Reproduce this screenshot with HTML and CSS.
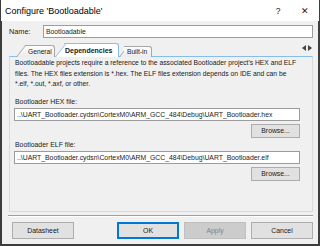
FILE: index.html
```html
<!DOCTYPE html>
<html lang="en">
<head>
    <meta charset="UTF-8">
    <title>Configure 'Bootloadable'</title>
    <link rel="stylesheet" href="styles.css">
</head>
<body>
    <div class="window">
        <div class="titlebar">
            <span class="title">Configure 'Bootloadable'</span>
            <span class="help">?</span>
            <span class="close">&#x2715;</span>
        </div>

        <div class="content">
            <div class="name-row">
                <label>Name:</label>
                <div class="field name-field">Bootloadable</div>
            </div>

            <div class="tabs">
                <div class="tab tab-general">General</div>
                <div class="tab tab-active">Dependencies</div>
                <div class="tab tab-builtin">Built-in</div>
                <div class="tab-arrows">
                    <span class="arrow arrow-left"></span>
                    <span class="arrow arrow-right"></span>
                </div>
            </div>

            <div class="panel">
                <p class="description">
                    Bootloadable projects require a reference to the associated Bootloader project's HEX and ELF<br>
                    files. The HEX files extension is *.hex. The ELF files extension depends on IDE and can be<br>
                    *.elf, *.out, *.axf, or other.
                </p>

                <div class="file-group">
                    <label>Bootloader HEX file:</label>
                    <div class="field path">..\UART_Bootloader.cydsn\CortexM0\ARM_GCC_484\Debug\UART_Bootloader.hex</div>
                    <button class="browse">Browse...</button>
                </div>

                <div class="file-group">
                    <label>Bootloader ELF file:</label>
                    <div class="field path">..\UART_Bootloader.cydsn\CortexM0\ARM_GCC_484\Debug\UART_Bootloader.elf</div>
                    <button class="browse">Browse...</button>
                </div>
            </div>

            <div class="separator"></div>

            <div class="buttons">
                <button class="btn">Datasheet</button>
                <div class="spacer"></div>
                <button class="btn btn-default">OK</button>
                <button class="btn" disabled>Apply</button>
                <button class="btn">Cancel</button>
            </div>
        </div>
    </div>
</body>
</html>
```

FILE: styles.css
```css
* {
    box-sizing: border-box;
}

body {
    margin: 0;
    font-family: 'Liberation Sans', Arial, sans-serif;
    font-size: 6.9px;
    color: #1a1a1a;
    background: #f0f0f0;
}

.window {
    width: 320px;
    height: 246px;
    display: flex;
    flex-direction: column;
    background: #f0f0f0;
    border: 2px solid #3d3d3d;
    border-top: none;
}

.titlebar {
    height: 21px;
    flex-shrink: 0;
    display: flex;
    align-items: center;
    background: #fff;
    padding-left: 4px;
    margin: 0 -2px;
    border-left: 1px solid #3d3d3d;
    border-right: 1px solid #3d3d3d;
}

.title {
    font-size: 9px;
    color: #000;
    flex: 1;
}

.help {
    font-size: 8.5px;
    width: 28px;
    text-align: center;
}

.close {
    font-size: 8.5px;
    width: 26px;
    text-align: center;
    margin-right: 1px;
}

.content {
    flex: 1;
    display: flex;
    flex-direction: column;
    padding: 4px 5px 0 6px;
}

.name-row {
    display: flex;
    align-items: center;
    height: 13px;
}

.name-row label {
    width: 35px;
    padding-left: 1px;
    font-size: 7.3px;
}

.field {
    flex: 1;
    height: 13px;
    line-height: 11px;
    background: #fff;
    border: 1px solid #9c9c9c;
    padding-left: 2px;
    white-space: nowrap;
    overflow: hidden;
}

.name-field {
    font-size: 6.8px;
}

/* tabs */
.tabs {
    display: flex;
    align-items: flex-end;
    height: 18px;
    padding-left: 18px;
    position: relative;
    z-index: 1;
}

.tab {
    position: relative;
    height: 12px;
    line-height: 11px;
    padding-left: 2px;
    border-top: 1px solid #a8a8a8;
    border-right: 1px solid #a8a8a8;
    border-top-right-radius: 3px;
    background: linear-gradient(#fdfdfd, #ececec);
    margin-bottom: -1px;
    white-space: nowrap;
}

.tab::before {
    content: '';
    position: absolute;
    left: -10px;
    top: -1px;
    bottom: 0;
    width: 12px;
    border-left: 1px solid #a8a8a8;
    border-top: 1px solid #a8a8a8;
    background: linear-gradient(#fdfdfd, #ececec);
    transform: skewX(-38deg);
    transform-origin: bottom left;
    z-index: -1;
}

.tab-general {
    width: 29px;
    font-size: 6.7px;
}

.tab-active {
    height: 14px;
    margin-left: 9px;
    width: 55px;
    padding-left: 1px;
    line-height: 13px;
    font-weight: bold;
    font-size: 7px;
    border-color: #86bdec;
    background: #fff;
    z-index: 2;
}

.tab-active::before {
    left: -9px;
    width: 11px;
    border-color: #86bdec;
    background: #fff;
}

.tab-builtin {
    height: 11px;
    margin-left: 5px;
    width: 28px;
    padding-left: 3px;
    line-height: 10px;
    font-size: 6.6px;
}

.tab-builtin::before {
    left: -5px;
    width: 7px;
}

.tab-arrows {
    margin-left: auto;
    margin-right: 1px;
    margin-bottom: 5px;
    display: flex;
    gap: 2px;
}

.arrow {
    width: 0;
    height: 0;
    border-top: 3px solid transparent;
    border-bottom: 3px solid transparent;
}

.arrow-left {
    border-right: 4px solid #444;
}

.arrow-right {
    border-left: 4px solid #444;
}

/* panel */
.panel {
    height: 156px;
    flex-shrink: 0;
    margin-left: 1px;
    border: 1px solid #dadada;
    border-top: 1px solid #86bdec;
    padding: 1px 4px 0 4px;
}

.description {
    margin: 0 0 0 1px;
    line-height: 10.5px;
    white-space: nowrap;
    font-size: 6.75px;
}

.file-group {
    display: flex;
    flex-direction: column;
    margin-top: 7px;
}

.file-group + .file-group {
    margin-top: 2px;
}

.file-group label {
    line-height: 10px;
    height: 11px;
    padding-left: 1px;
    font-size: 6.9px;
    white-space: nowrap;
}

.file-group .field {
    flex: none;
    width: 286px;
    height: 13px;
    line-height: 11px;
}

.path {
    font-size: 6.85px;
}

.browse {
    align-self: flex-start;
    margin: 3px 0 0 237px;
    width: 49px;
    height: 14px;
    font: inherit;
    font-size: 6.8px;
    background: #e1e1e1;
    border: 1px solid #adadad;
    padding: 0;
    color: #1a1a1a;
}

.separator {
    margin: 3px 0 0 0;
    height: 2px;
    border-top: 1px solid #a0a0a0;
    border-bottom: 1px solid #fff;
}

/* bottom buttons */
.buttons {
    display: flex;
    gap: 5px;
    margin-top: 5px;
    padding: 0 0 0 4px;
}

.spacer {
    flex: 1;
}

.btn {
    width: 62px;
    height: 17px;
    font: inherit;
    font-size: 6.9px;
    background: #e1e1e1;
    border: 1px solid #adadad;
    color: #1a1a1a;
    padding: 0;
}

.btn-default {
    border: 1px solid #0078d7;
    box-shadow: inset 0 0 0 1px #0078d7;
}

.btn:disabled {
    background: #cccccc;
    border-color: #bfbfbf;
    color: #838383;
}
```
